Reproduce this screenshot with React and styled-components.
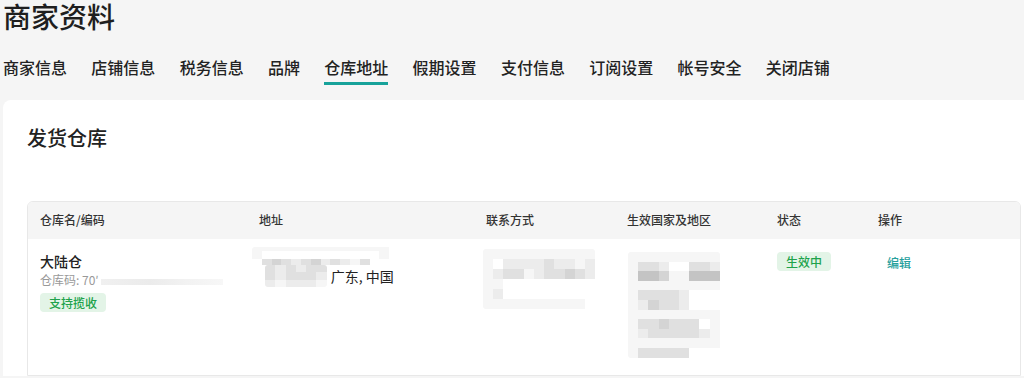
import React from 'react'
import styled, { createGlobalStyle } from 'styled-components'

const GlobalStyle = createGlobalStyle`
  html, body {
    margin: 0;
    background: #f5f5f5;
    overflow: hidden;
  }
  body {
    font-family: "Noto Sans CJK SC", "Noto Sans", sans-serif;
    color: #222;
  }
`

const Page = styled.div`
  width: 1042px;
  padding: 1px 0 0 3px;
`

const PageTitle = styled.h1`
  margin: 0;
  font-size: 28px;
  line-height: 30px;
  font-weight: 500;
  color: #1f1f1f;
`

const Tabs = styled.nav`
  display: flex;
  align-items: flex-start;
  gap: 24.3px;
  margin-top: 24px;
  height: 45px;
`

const Tab = styled.div`
  font-size: 16px;
  line-height: 24px;
  font-weight: 500;
  color: #222;
  padding-bottom: 3px;
  border-bottom: 3px solid ${props => props.$active ? '#17a29a' : 'transparent'};
  white-space: nowrap;
`

const Panel = styled.section`
  background: #fff;
  border-radius: 8px 0 0 0;
  padding: 24px 24px 0;
`

const PanelTitle = styled.h2`
  margin: 0 0 49px;
  font-size: 20px;
  line-height: 28px;
  font-weight: 500;
  color: #222;
`

const Table = styled.div`
  display: grid;
  grid-template-columns: 219px 227px 141px 150px 101px 1fr;
  border: 1px solid #e8e8e8;
  border-radius: 6px 6px 0 0;
  overflow: hidden;
`

const HeadCell = styled.div`
  display: flex;
  align-items: center;
  height: 37px;
  box-sizing: border-box;
  padding: 0 12px 3px;
  background: #f5f5f5;
  font-size: 12px;
  font-weight: 500;
  color: #333;
  white-space: nowrap;
`

const Cell = styled.div`
  height: 136px;
  box-sizing: border-box;
  padding: 12px;
  display: flex;
  flex-direction: column;
  align-items: flex-start;
`

const Name = styled.div`
  font-size: 14px;
  line-height: 20px;
  font-weight: 500;
  color: #222;
`

const Code = styled.div`
  display: flex;
  align-items: center;
  font-size: 12px;
  line-height: 18px;
  color: #999;
  white-space: nowrap;
`

const CodeBlur = styled.span`
  display: inline-block;
  width: 122px;
  height: 6px;
  margin-left: 2px;
  margin-top: 3px;
  background: linear-gradient(90deg, #f0f0f0, #ebebeb 40%, #f2f2f2 70%, #f7f7f7);
`

const Tag = styled.span`
  display: inline-block;
  height: 19px;
  line-height: 19px;
  padding: 0 9px;
  margin-top: ${props => props.$top || 0}px;
  border-radius: 4px;
  background: #e3f4e7;
  color: #20a24b;
  font-size: 12px;
  font-weight: 500;
  white-space: nowrap;
`

const Address = styled.div`
  display: flex;
  flex-direction: column;
  margin: -4px 0 0 -7px;
`

const AddressLine = styled.div`
  display: flex;
  align-items: center;
  gap: 4px;
  margin-left: 13px;
`

const AddressText = styled.span`
  font-size: 14px;
  line-height: 20px;
  color: #222;
  white-space: nowrap;
`

const Blurred = styled.div`
  display: grid;
  grid-template-columns: ${props => props.$cols};
  grid-template-rows: ${props => props.$rows};
  margin: ${props => props.$margin || 0};
  border-radius: 3px;
  overflow: hidden;
`

const shades = {
  '0': '#ffffff',
  f: '#f6f6f6',
  e: '#ececec',
  d: '#e0e0e0',
  c: '#d4d4d4',
  b: '#c4c4c4'
}

const Pixel = styled.span`
  background: ${props => shades[props.$shade]};
`

// pixelated stand-in for the blurred-out private data
const Mosaic = ({ rows, cell, heights, margin }) => {
  const cols = rows[0].length
  const rowTpl = Array.isArray(heights)
    ? heights.map(h => h + 'px').join(' ')
    : `repeat(${rows.length}, ${heights}px)`
  return (
    <Blurred $cols={`repeat(${cols}, ${cell}px)`} $rows={rowTpl} $margin={margin}>
      {rows.flatMap((row, r) =>
        row.split('').map((s, c) => <Pixel key={r + '-' + c} $shade={s} />)
      )}
    </Blurred>
  )
}

const Action = styled.a`
  display: inline-block;
  padding-left: 9px;
  margin-top: 2px;
  font-size: 12px;
  line-height: 20px;
  font-weight: 500;
  color: #26a09c;
  cursor: pointer;
`

const columns = ['仓库名/编码', '地址', '联系方式', '生效国家及地区', '状态', '操作']
const tabs = ['商家信息', '店铺信息', '税务信息', '品牌', '仓库地址', '假期设置', '支付信息', '订阅设置', '帐号安全', '关闭店铺']

const addressTop = [
  'ffffffffffffff',
  'f000000000000f',
  '0dcdedcedefd0'.padEnd(14, '0')
]

const addressBottom = [
  'dededd',
  'deddde',
  'efeeef'
]

const contact = [
  'fffffffffff',
  'f0eeeedeefe',
  'feddfeddcde',
  'ff000000000',
  'fe000000000',
  'ffffffffff0'
]

const region = [
  'fffffffff',
  'fdde00dde',
  'fbbcffbbb',
  'fffffffff',
  'fdddde000',
  'fecdde000',
  'fffffffff',
  'fddcddd0f',
  'fedddddef',
  'fffffffff',
  'fddddd000'
]

export default function App () {
  return (
    <>
      <GlobalStyle />
      <Page>
        <PageTitle>商家资料</PageTitle>
        <Tabs>
          {tabs.map(t => <Tab key={t} $active={t === '仓库地址'}>{t}</Tab>)}
        </Tabs>
        <Panel>
          <PanelTitle>发货仓库</PanelTitle>
          <Table>
            {columns.map(c => <HeadCell key={c}>{c}</HeadCell>)}

            <Cell>
              <Name>大陆仓</Name>
              <Code>仓库码: 70′<CodeBlur /></Code>
              <Tag $top={4}>支持揽收</Tag>
            </Cell>

            <Cell>
              <Address>
                <Mosaic rows={addressTop} cell={9.8} heights={[4, 8, 6]} />
                <AddressLine>
                  <Mosaic rows={addressBottom} cell={10.3} heights={7.4} />
                  <AddressText>广东, 中国</AddressText>
                </AddressLine>
              </Address>
            </Cell>

            <Cell>
              <Mosaic rows={contact} cell={10.2} heights={10} margin='-2px 0 0 -3px' />
            </Cell>

            <Cell>
              <Mosaic rows={region} cell={10.2} heights={9.6} margin='1px 0 0 1px' />
            </Cell>

            <Cell>
              <Tag $top={1}>生效中</Tag>
            </Cell>

            <Cell>
              <Action>编辑</Action>
            </Cell>
          </Table>
        </Panel>
      </Page>
    </>
  )
}
